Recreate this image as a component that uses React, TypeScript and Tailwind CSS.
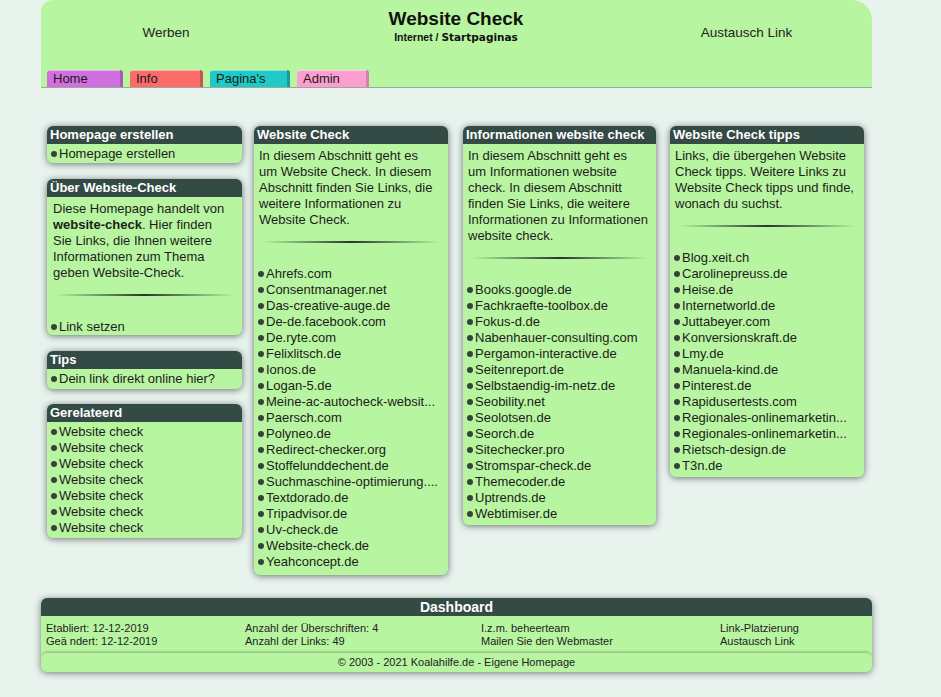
import React from "react";

const FONT = "font-['Liberation_Sans',Arial,sans-serif]";

function Bullet() {
  return <span className="inline-block w-[6px] h-[6px] rounded-full bg-[#3a3f3c] mr-[2px] shrink-0" />;
}

function LinkItem({ children }: { children: React.ReactNode }) {
  return (
    <div className="flex items-center h-[16px] text-[13px] leading-[16px] text-[#1c1c1c] whitespace-nowrap">
      <Bullet />
      <span>{children}</span>
    </div>
  );
}

function Box({ title, children }: { title: string; children: React.ReactNode }) {
  return (
    <div className="rounded-[6px] overflow-hidden bg-[#b8f5a0] shadow-[0_1px_7px_rgba(0,0,0,0.55)]">
      <div className="h-[18px] bg-[#344a44] text-white font-bold text-[13px] leading-[18px] pl-[3px] whitespace-nowrap">
        {title}
      </div>
      {children}
    </div>
  );
}

function Separator() {
  return <div className="mt-[13px] mx-[8px] h-[2px] bg-linear-to-r from-transparent via-[#22382a] to-transparent" />;
}

function Para({ lines }: { lines: React.ReactNode[] }) {
  return (
    <div className="pt-[4px] px-[5px] text-[13px] leading-[16px] text-[#1c1c1c] whitespace-nowrap">
      {lines.map((l, i) => (
        <div key={i}>{l}</div>
      ))}
    </div>
  );
}

function LinkList({ items, className = "" }: { items: string[]; className?: string }) {
  return (
    <div className={"pl-[4px] " + className}>
      {items.map((t, i) => (
        <LinkItem key={i}>{t}</LinkItem>
      ))}
    </div>
  );
}

const col2 = [
  "Ahrefs.com",
  "Consentmanager.net",
  "Das-creative-auge.de",
  "De-de.facebook.com",
  "De.ryte.com",
  "Felixlitsch.de",
  "Ionos.de",
  "Logan-5.de",
  "Meine-ac-autocheck-websit...",
  "Paersch.com",
  "Polyneo.de",
  "Redirect-checker.org",
  "Stoffelunddechent.de",
  "Suchmaschine-optimierung....",
  "Textdorado.de",
  "Tripadvisor.de",
  "Uv-check.de",
  "Website-check.de",
  "Yeahconcept.de",
];

const col3 = [
  "Books.google.de",
  "Fachkraefte-toolbox.de",
  "Fokus-d.de",
  "Nabenhauer-consulting.com",
  "Pergamon-interactive.de",
  "Seitenreport.de",
  "Selbstaendig-im-netz.de",
  "Seobility.net",
  "Seolotsen.de",
  "Seorch.de",
  "Sitechecker.pro",
  "Stromspar-check.de",
  "Themecoder.de",
  "Uptrends.de",
  "Webtimiser.de",
];

const col4 = [
  "Blog.xeit.ch",
  "Carolinepreuss.de",
  "Heise.de",
  "Internetworld.de",
  "Juttabeyer.com",
  "Konversionskraft.de",
  "Lmy.de",
  "Manuela-kind.de",
  "Pinterest.de",
  "Rapidusertests.com",
  "Regionales-onlinemarketin...",
  "Regionales-onlinemarketin...",
  "Rietsch-design.de",
  "T3n.de",
];

function Tab({ label, bg, edge, w }: { label: string; bg: string; edge: string; w: string }) {
  return (
    <div className={`h-[17px] ${w} ${bg} rounded-t-[3px] border-r-[3px] ${edge} text-[13px] leading-[17px] pl-[6px] text-[#1a1a1a] shadow-[inset_0_1px_0_rgba(255,255,255,0.5)]`}>
      {label}
    </div>
  );
}

export default function App() {
  return (
    <div className={`min-h-[697px] w-full bg-[#e8f3ee] ${FONT} text-[#1c1c1c]`}>
      <div className="ml-[41px] w-[831px]">
        {/* Header */}
        <div className="bg-[#b8f5a0] rounded-tl-[12px] rounded-tr-[20px] border-b border-[#9aab9a] h-[88px] flex flex-col">
          <div className="grid grid-cols-[250px_330px_251px] h-[70px]">
            <div className="text-center pt-[25px] text-[13.5px] leading-[16px] text-[#222]">Werben</div>
            <div className="text-center pt-[8px]">
              <div className="text-[19px] leading-[22px] font-bold text-[#111]">Website Check</div>
              <div className="mt-[1px] text-[10.5px] leading-[12px] font-bold text-[#111]">
                Internet / <span className="font-['DejaVu_Sans',Verdana,sans-serif]">Startpaginas</span>
              </div>
            </div>
            <div className="text-center pt-[25px] text-[13.5px] leading-[16px] text-[#222]">Austausch Link</div>
          </div>
          <div className="flex pl-[6px] gap-[7px] h-[17px]">
            <Tab label="Home" bg="bg-[#d16fe0]" edge="border-[#a55cb2]" w="w-[76px]" />
            <Tab label="Info" bg="bg-[#fb6b68]" edge="border-[#c45654]" w="w-[73px]" />
            <Tab label="Pagina's" bg="bg-[#1fc9c6]" edge="border-[#1f9896]" w="w-[80px]" />
            <Tab label="Admin" bg="bg-[#fc9fd0]" edge="border-[#c987a9]" w="w-[72px]" />
          </div>
        </div>

        {/* Columns */}
        <div className="flex items-start mt-[38px] pl-[6px]">
          <div className="w-[195px] flex flex-col">
            <Box title="Homepage erstellen">
              <LinkList items={["Homepage erstellen"]} className="pt-[2px] pb-[1px]" />
            </Box>
            <div className="mt-[16px]">
              <Box title="Über Website-Check">
                <div className="pt-[4px] px-[6px] text-[13px] leading-[16px] text-[#1c1c1c] whitespace-nowrap">
                  <div>Diese Homepage handelt von</div>
                  <div>
                    <b>website-check</b>. Hier finden
                  </div>
                  <div>Sie Links, die Ihnen weitere</div>
                  <div>Informationen zum Thema</div>
                  <div>geben Website-Check.</div>
                </div>
                <Separator />
                <LinkList items={["Link setzen"]} className="mt-[23px]" />
              </Box>
            </div>
            <div className="mt-[16px]">
              <Box title="Tips">
                <LinkList items={["Dein link direkt online hier?"]} className="pt-[2px] pb-[2px]" />
              </Box>
            </div>
            <div className="mt-[15px]">
              <Box title="Gerelateerd">
                <LinkList items={Array(7).fill("Website check")} className="pt-[2px] pb-[2px]" />
              </Box>
            </div>
          </div>

          <div className="w-[194px] ml-[12px]">
            <Box title="Website Check">
              <Para
                lines={[
                  "In diesem Abschnitt geht es",
                  "um Website Check. In diesem",
                  "Abschnitt finden Sie Links, die",
                  "weitere Informationen zu",
                  "Website Check.",
                ]}
              />
              <Separator />
              <LinkList items={col2} className="mt-[23px] pb-[5px]" />
            </Box>
          </div>

          <div className="w-[193px] ml-[15px]">
            <Box title="Informationen website check">
              <Para
                lines={[
                  "In diesem Abschnitt geht es",
                  "um Informationen website",
                  "check. In diesem Abschnitt",
                  "finden Sie Links, die weitere",
                  "Informationen zu Informationen",
                  "website check.",
                ]}
              />
              <Separator />
              <LinkList items={col3} className="mt-[23px] pb-[3px]" />
            </Box>
          </div>

          <div className="w-[194px] ml-[14px]">
            <Box title="Website Check tipps">
              <Para
                lines={[
                  "Links, die übergehen Website",
                  "Check tipps. Weitere Links zu",
                  "Website Check tipps und finde,",
                  "wonach du suchst.",
                ]}
              />
              <Separator />
              <LinkList items={col4} className="mt-[23px] pb-[3px]" />
            </Box>
          </div>
        </div>

        {/* Dashboard */}
        <div className="mt-[23px] rounded-[6px] overflow-hidden shadow-[0_1px_7px_rgba(0,0,0,0.5)] bg-[#b8f5a0]">
          <div className="h-[18px] bg-[#344a44] text-white font-bold text-[14px] leading-[18px] text-center">
            Dashboard
          </div>
          <div className="grid grid-cols-[199px_236px_239px_1fr] pl-[5px] pt-[6px] pb-[4px] text-[11px] leading-[13px] text-[#222]">
            <div>
              <div>Etabliert: 12-12-2019</div>
              <div>Geä ndert: 12-12-2019</div>
            </div>
            <div>
              <div>Anzahl der Überschriften: 4</div>
              <div>Anzahl der Links: 49</div>
            </div>
            <div>
              <div>I.z.m. beheerteam</div>
              <div>Mailen Sie den Webmaster</div>
            </div>
            <div>
              <div>Link-Platzierung</div>
              <div>Austausch Link</div>
            </div>
          </div>
          <div className="h-[20px] rounded-[6px] border-t border-[#9cc48c] shadow-[0_-1px_2px_rgba(0,0,0,0.15)] text-center text-[11px] leading-[19px] text-[#222]">
            © 2003 - 2021 Koalahilfe.de - Eigene Homepage
          </div>
        </div>
      </div>
    </div>
  );
}
